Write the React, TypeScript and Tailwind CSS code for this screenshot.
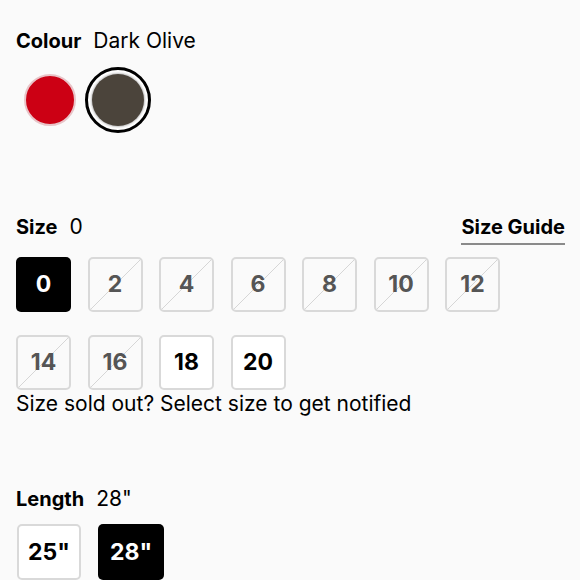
import React from "react";

const sizes1 = [
  { v: "0", state: "selected" },
  { v: "2", state: "out" },
  { v: "4", state: "out" },
  { v: "6", state: "out" },
  { v: "8", state: "out" },
  { v: "10", state: "out" },
  { v: "12", state: "out" },
];
const sizes2 = [
  { v: "14", state: "out" },
  { v: "16", state: "out" },
  { v: "18", state: "ok" },
  { v: "20", state: "ok" },
];

function SizeBox({ v, state }: { v: string; state: string }) {
  if (state === "selected") {
    return (
      <div className="w-[55px] h-[55px] rounded-[5px] bg-black text-white flex items-center justify-center text-[23px] font-bold">
        {v}
      </div>
    );
  }
  if (state === "ok") {
    return (
      <div className="w-[55px] h-[55px] rounded-[5px] bg-white border-2 border-[#d9d9d9] text-black flex items-center justify-center text-[23px] font-bold">
        {v}
      </div>
    );
  }
  return (
    <div className="relative w-[55px] h-[55px] rounded-[5px] border-2 border-[#d9d9d9] text-[#555555] flex items-center justify-center text-[23px] font-bold overflow-hidden">
      <svg className="absolute inset-0 w-full h-full" viewBox="0 0 51 51" preserveAspectRatio="none">
        <line x1="0" y1="51" x2="51" y2="0" stroke="#d6d6d6" strokeWidth="1" />
      </svg>
      <span className="relative">{v}</span>
    </div>
  );
}

export default function App() {
  return (
    <div
      className="w-[580px] h-[580px] overflow-hidden bg-[#fafafa] text-black"
      style={{ fontFamily: "Inter, 'Noto Sans', sans-serif" }}
    >
      <div className="pt-[29px] pl-[16px] flex items-baseline gap-[12px] leading-[24px]">
        <span className="font-bold text-[20px]">Colour</span>
        <span className="text-[21px]">Dark Olive</span>
      </div>
      <div className="mt-[14px] pl-[17px] flex gap-[2px]">
        <div className="w-[66px] h-[66px] flex items-center justify-center">
          <div className="w-[52px] h-[52px] rounded-full bg-[#cc0014] border-2 border-[#e8c4c8]" />
        </div>
        <div className="w-[66px] h-[66px] rounded-full border-[3px] border-black bg-white flex items-center justify-center">
          <div className="w-[52px] h-[52px] rounded-full bg-[#4b443b] shadow-[0_0_2px_1px_rgba(0,0,0,0.25)]" />
        </div>
      </div>

      <div className="mt-[82px] pl-[16px] pr-[15px] flex items-start justify-between">
        <div className="flex items-baseline gap-[12px] leading-[24px]">
          <span className="font-bold text-[20px]">Size</span>
          <span className="text-[21px]">0</span>
        </div>
        <div className="text-[20px] leading-[24px] font-bold border-b-2 border-[#8a8a8a] pb-[4px]">
          Size Guide
        </div>
      </div>

      <div className="mt-[12px] pl-[16px] flex gap-[16.5px]">
        {sizes1.map((s) => (
          <SizeBox key={s.v} v={s.v} state={s.state} />
        ))}
      </div>
      <div className="mt-[23px] pl-[16px] flex gap-[16.5px]">
        {sizes2.map((s) => (
          <SizeBox key={s.v} v={s.v} state={s.state} />
        ))}
      </div>
      <div className="pl-[16px] mt-[2px] text-[21px] leading-[24px]">
        Size sold out? Select size to get notified
      </div>

      <div className="mt-[71px] pl-[16px] flex items-baseline gap-[12px] leading-[24px]">
        <span className="font-bold text-[20px]">Length</span>
        <span className="text-[21px]">28"</span>
      </div>
      <div className="mt-[13px] pl-[17px] flex gap-[17px]">
        <div className="w-[64px] h-[56px] rounded-[5px] bg-white border-2 border-[#d9d9d9] flex items-center justify-center text-[23px] font-bold">
          25"
        </div>
        <div className="w-[66px] h-[56px] rounded-[5px] bg-black text-white flex items-center justify-center text-[23px] font-bold">
          28"
        </div>
      </div>
    </div>
  );
}
